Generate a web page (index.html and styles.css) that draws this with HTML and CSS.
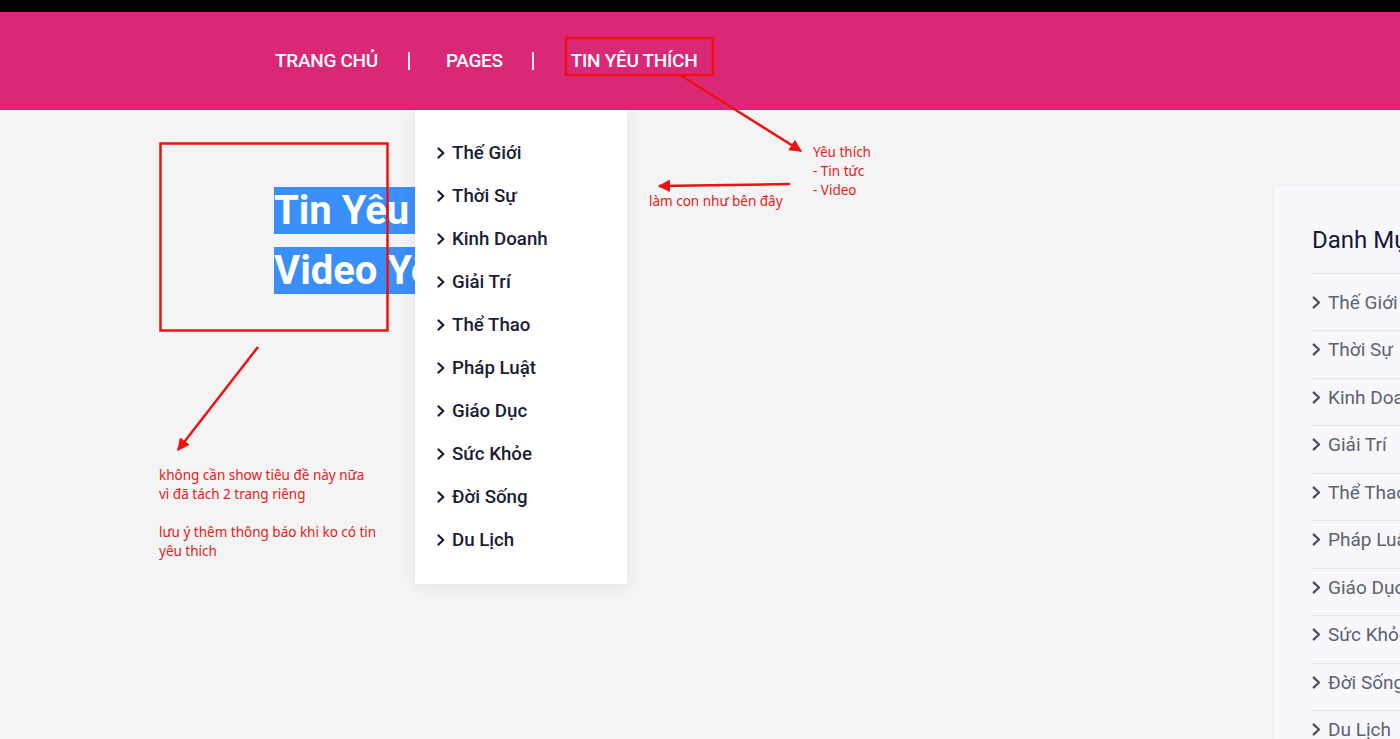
FILE: index.html
```html
<!DOCTYPE html>
<html lang="vi">
<head>
<meta charset="utf-8">
<title>Tin Yêu Thích</title>
<link rel="stylesheet" href="styles.css">
</head>
<body>
<div class="page">
  <header class="header">
    <div class="topbar"></div>
    <nav class="nav">
      <a class="nav-link" href="#">TRANG CHỦ</a>
      <span class="nav-sep"></span>
      <a class="nav-link" href="#">PAGES</a>
      <span class="nav-sep sep-2"></span>
      <a class="nav-link" href="#">TIN YÊU THÍCH</a>
    </nav>
    <ul class="dropdown">
      <li><svg class="chev" viewBox="0 0 8 12"><path d="M1.5 1.5 L6.3 6 L1.5 10.5"/></svg>Thế Giới</li>
      <li><svg class="chev" viewBox="0 0 8 12"><path d="M1.5 1.5 L6.3 6 L1.5 10.5"/></svg>Thời Sự</li>
      <li><svg class="chev" viewBox="0 0 8 12"><path d="M1.5 1.5 L6.3 6 L1.5 10.5"/></svg>Kinh Doanh</li>
      <li><svg class="chev" viewBox="0 0 8 12"><path d="M1.5 1.5 L6.3 6 L1.5 10.5"/></svg>Giải Trí</li>
      <li><svg class="chev" viewBox="0 0 8 12"><path d="M1.5 1.5 L6.3 6 L1.5 10.5"/></svg>Thể Thao</li>
      <li><svg class="chev" viewBox="0 0 8 12"><path d="M1.5 1.5 L6.3 6 L1.5 10.5"/></svg>Pháp Luật</li>
      <li><svg class="chev" viewBox="0 0 8 12"><path d="M1.5 1.5 L6.3 6 L1.5 10.5"/></svg>Giáo Dục</li>
      <li><svg class="chev" viewBox="0 0 8 12"><path d="M1.5 1.5 L6.3 6 L1.5 10.5"/></svg>Sức Khỏe</li>
      <li><svg class="chev" viewBox="0 0 8 12"><path d="M1.5 1.5 L6.3 6 L1.5 10.5"/></svg>Đời Sống</li>
      <li><svg class="chev" viewBox="0 0 8 12"><path d="M1.5 1.5 L6.3 6 L1.5 10.5"/></svg>Du Lịch</li>
    </ul>
  </header>

  <main class="main">
    <section class="content">
      <h2 class="heading"><span class="sel">Tin Yêu Thích</span></h2>
      <h2 class="heading"><span class="sel">Video Yêu Thích</span></h2>
    </section>
    <aside class="sidebar">
      <h3 class="side-title">Danh Mục</h3>
      <ul class="side-list">
        <li><svg class="chev side-chev" viewBox="0 0 8 12"><path d="M1.5 1.5 L6.3 6 L1.5 10.5"/></svg>Thế Giới</li>
        <li><svg class="chev side-chev" viewBox="0 0 8 12"><path d="M1.5 1.5 L6.3 6 L1.5 10.5"/></svg>Thời Sự</li>
        <li><svg class="chev side-chev" viewBox="0 0 8 12"><path d="M1.5 1.5 L6.3 6 L1.5 10.5"/></svg>Kinh Doanh</li>
        <li><svg class="chev side-chev" viewBox="0 0 8 12"><path d="M1.5 1.5 L6.3 6 L1.5 10.5"/></svg>Giải Trí</li>
        <li><svg class="chev side-chev" viewBox="0 0 8 12"><path d="M1.5 1.5 L6.3 6 L1.5 10.5"/></svg>Thể Thao</li>
        <li><svg class="chev side-chev" viewBox="0 0 8 12"><path d="M1.5 1.5 L6.3 6 L1.5 10.5"/></svg>Pháp Luật</li>
        <li><svg class="chev side-chev" viewBox="0 0 8 12"><path d="M1.5 1.5 L6.3 6 L1.5 10.5"/></svg>Giáo Dục</li>
        <li><svg class="chev side-chev" viewBox="0 0 8 12"><path d="M1.5 1.5 L6.3 6 L1.5 10.5"/></svg>Sức Khỏe</li>
        <li><svg class="chev side-chev" viewBox="0 0 8 12"><path d="M1.5 1.5 L6.3 6 L1.5 10.5"/></svg>Đời Sống</li>
        <li><svg class="chev side-chev" viewBox="0 0 8 12"><path d="M1.5 1.5 L6.3 6 L1.5 10.5"/></svg>Du Lịch</li>
      </ul>
    </aside>
  </main>

  <div class="annotations">
    <svg class="marks" viewBox="0 0 1400 739" width="1400" height="739">
      <defs>
        <marker id="ah" viewBox="0 0 10 10" refX="9" refY="5" markerWidth="5" markerHeight="5" orient="auto">
          <path d="M0 0 L10 5 L0 10 Z" fill="#ee1111"/>
        </marker>
      </defs>
      <rect x="566" y="38" width="147" height="37" fill="none" stroke="#ee1111" stroke-width="2.5"/>
      <rect x="160.5" y="143.5" width="227" height="187" fill="none" stroke="#ee1111" stroke-width="2.5"/>
      <line x1="680" y1="75" x2="801" y2="151" stroke="#ee1111" stroke-width="2.5" marker-end="url(#ah)"/>
      <line x1="790" y1="184" x2="659" y2="186" stroke="#ee1111" stroke-width="2.5" marker-end="url(#ah)"/>
      <line x1="258" y1="347" x2="178" y2="450" stroke="#ee1111" stroke-width="2.5" marker-end="url(#ah)"/>
    </svg>
    <div class="note note-fav">Yêu thích<br>- Tin tức<br>- Video</div>
    <div class="note note-child">làm con như bên đây</div>
    <div class="note note-title">không cần show tiêu đề này nữa<br>vì đã tách 2 trang riêng<br><br>lưu ý thêm thông báo khi ko có tin<br>yêu thích</div>
  </div>
</div>
</body>
</html>
```

FILE: styles.css
```css
* { box-sizing: border-box; }

html, body {
  margin: 0;
  padding: 0;
}

body {
  background: #f4f4f4;
  font-family: Roboto, "Noto Sans", sans-serif;
  width: 1400px;
  height: 739px;
  overflow: hidden;
}

.page {
  position: relative;
  width: 1400px;
  height: 739px;
}

.header {
  position: relative;
  z-index: 2;
}

.topbar {
  height: 12px;
  background: #000;
}

.nav {
  height: 98px;
  background: #da2877;
  display: flex;
  align-items: center;
  padding-left: 275px;
}

.nav-link {
  color: #fff;
  text-decoration: none;
  font-size: 19px;
  font-weight: 500;
  letter-spacing: -0.3px;
  line-height: 24px;
}

.nav-sep {
  width: 0;
  height: 18px;
  border-left: 2px solid rgba(255, 255, 255, 0.9);
  margin: 0 36px 0 30px;
}

.sep-2 {
  margin: 0 37px 0 29px;
}

.dropdown {
  position: absolute;
  left: 415px;
  top: 110px;
  width: 212px;
  height: 474px;
  margin: 0;
  padding: 21px 0 0 22px;
  list-style: none;
  background: #fff;
  box-shadow: 0 2px 14px rgba(0, 0, 0, 0.07);
}

.dropdown li {
  display: flex;
  align-items: center;
  height: 43.1px;
  font-size: 18.7px;
  font-weight: 500;
  color: #1a1d33;
}

.chev {
  width: 8px;
  height: 12px;
  margin-right: 7px;
  flex-shrink: 0;
}

.chev path {
  fill: none;
  stroke: #171a30;
  stroke-width: 2.2;
  stroke-linecap: round;
  stroke-linejoin: round;
}

.main {
  display: grid;
  grid-template-columns: 1274px 360px;
}

.content {
  padding: 71px 0 0 274px;
}

.heading {
  margin: 0;
  font-size: 40px;
  line-height: 60px;
  font-weight: 700;
  color: #fff;
  white-space: nowrap;
}

.sel {
  background: #3a8ffa;
}

.sidebar {
  margin-top: 76px;
  background: #f8f7fc;
  padding: 38px 0 0 38px;
  height: 700px;
  box-shadow: -1px 0 3px rgba(0, 0, 0, 0.03);
}

.side-title {
  margin: 0;
  font-size: 24px;
  font-weight: 400;
  line-height: 30px;
  color: #141838;
  padding-top: 1px;
  padding-bottom: 18px;
  border-bottom: 1px solid #e5e4ee;
}

.side-list {
  list-style: none;
  margin: 0;
  padding: 9.5px 0 0;
}

.side-list li {
  display: flex;
  align-items: center;
  height: 47.5px;
  padding-bottom: 9.5px;
  border-bottom: 1px solid #e5e4ee;
  font-size: 19px;
  color: #5d6270;
}

.side-chev {
  width: 9px;
  height: 13px;
  margin-right: 7px;
}

.side-chev path {
  stroke: #4a5160;
}

.annotations {
  position: absolute;
  inset: 0;
  z-index: 5;
  pointer-events: none;
}

.marks {
  position: absolute;
  left: 0;
  top: 0;
}

.note {
  position: absolute;
  color: #e81a1a;
  font-family: "Noto Sans", "DejaVu Sans", sans-serif;
  font-size: 13.5px;
  line-height: 19px;
  white-space: nowrap;
}

.note-fav {
  left: 813px;
  top: 143px;
}

.note-child {
  left: 649px;
  top: 192px;
}

.note-title {
  left: 159px;
  top: 466px;
}
```
